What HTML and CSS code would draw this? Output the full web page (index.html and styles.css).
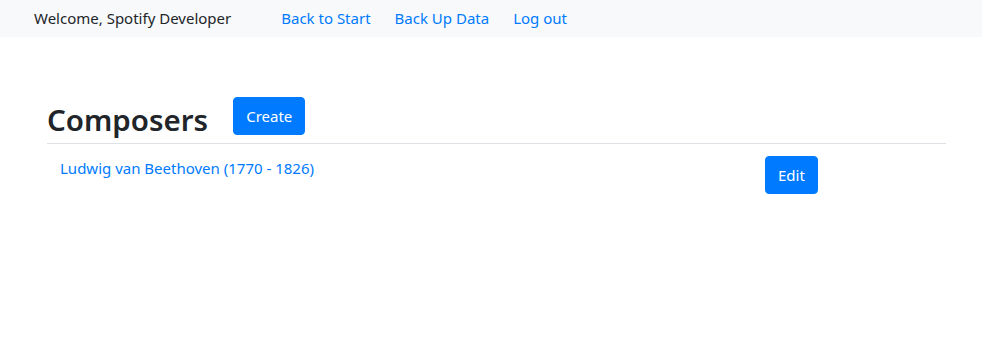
FILE: index.html
```html
<!DOCTYPE html>
<html>
	<head>
		<meta charset="utf-8" />
		<title>Composers</title>
		<link rel="stylesheet" href="styles.css">
	</head>
	<body>
		<nav class="navbar">
			<span class="welcome">Welcome, Spotify Developer</span>
			<ul class="nav">
				<li><a href="#">Back to Start</a></li>
				<li><a href="#">Back Up Data</a></li>
				<li><a href="#">Log out</a></li>
			</ul>
		</nav>
		<div class="main">
			<div class="title">
				<h1>Composers</h1>
				<a class="btn" href="#">Create</a>
			</div>
			<div class="list">
				<div class="row">
					<a class="name" href="#">Ludwig van Beethoven (1770 - 1826)</a>
					<a class="btn" href="#">Edit</a>
				</div>
			</div>
		</div>
	</body>
</html>
```

FILE: styles.css
```css
*{
	margin:0px;
	padding:0px;
	box-sizing: border-box;
}
body{
	background: #fff;
	color: #212529;
	font-family: "Noto Sans", "Open Sans", sans-serif;
	font-size: 15px;
	line-height: 1.5;
}
a{
	color: #007bff;
	text-decoration: none;
}
.navbar{
	height: 37px;
	background: #f8f9fa;
	display: flex;
	align-items: center;
	padding-left: 34px;
}
.welcome{
	margin-right: 50px;
}
.nav{
	display: flex;
	gap: 24px;
	list-style: none;
}
.main{
	margin: 57px 36px 0 47px;
}
.title{
	display: flex;
	align-items: center;
	gap: 25px;
	padding-bottom: 6px;
	border-bottom: 1px solid #dee2e6;
}
h1{
	font-size: 29.5px;
	font-weight: 600;
	line-height: 1.2;
	padding-top: 8px;
}
.btn{
	display: inline-block;
	height: 38px;
	line-height: 36px;
	padding: 0 12px;
	border: 1px solid #007bff;
	border-radius: 4px;
	background: #007bff;
	color: #fff;
}
.row{
	display: flex;
	align-items: flex-start;
	padding: 12px 0 0 13px;
}
.name{
	width: 705px;
	padding-top: 1px;
}
```
